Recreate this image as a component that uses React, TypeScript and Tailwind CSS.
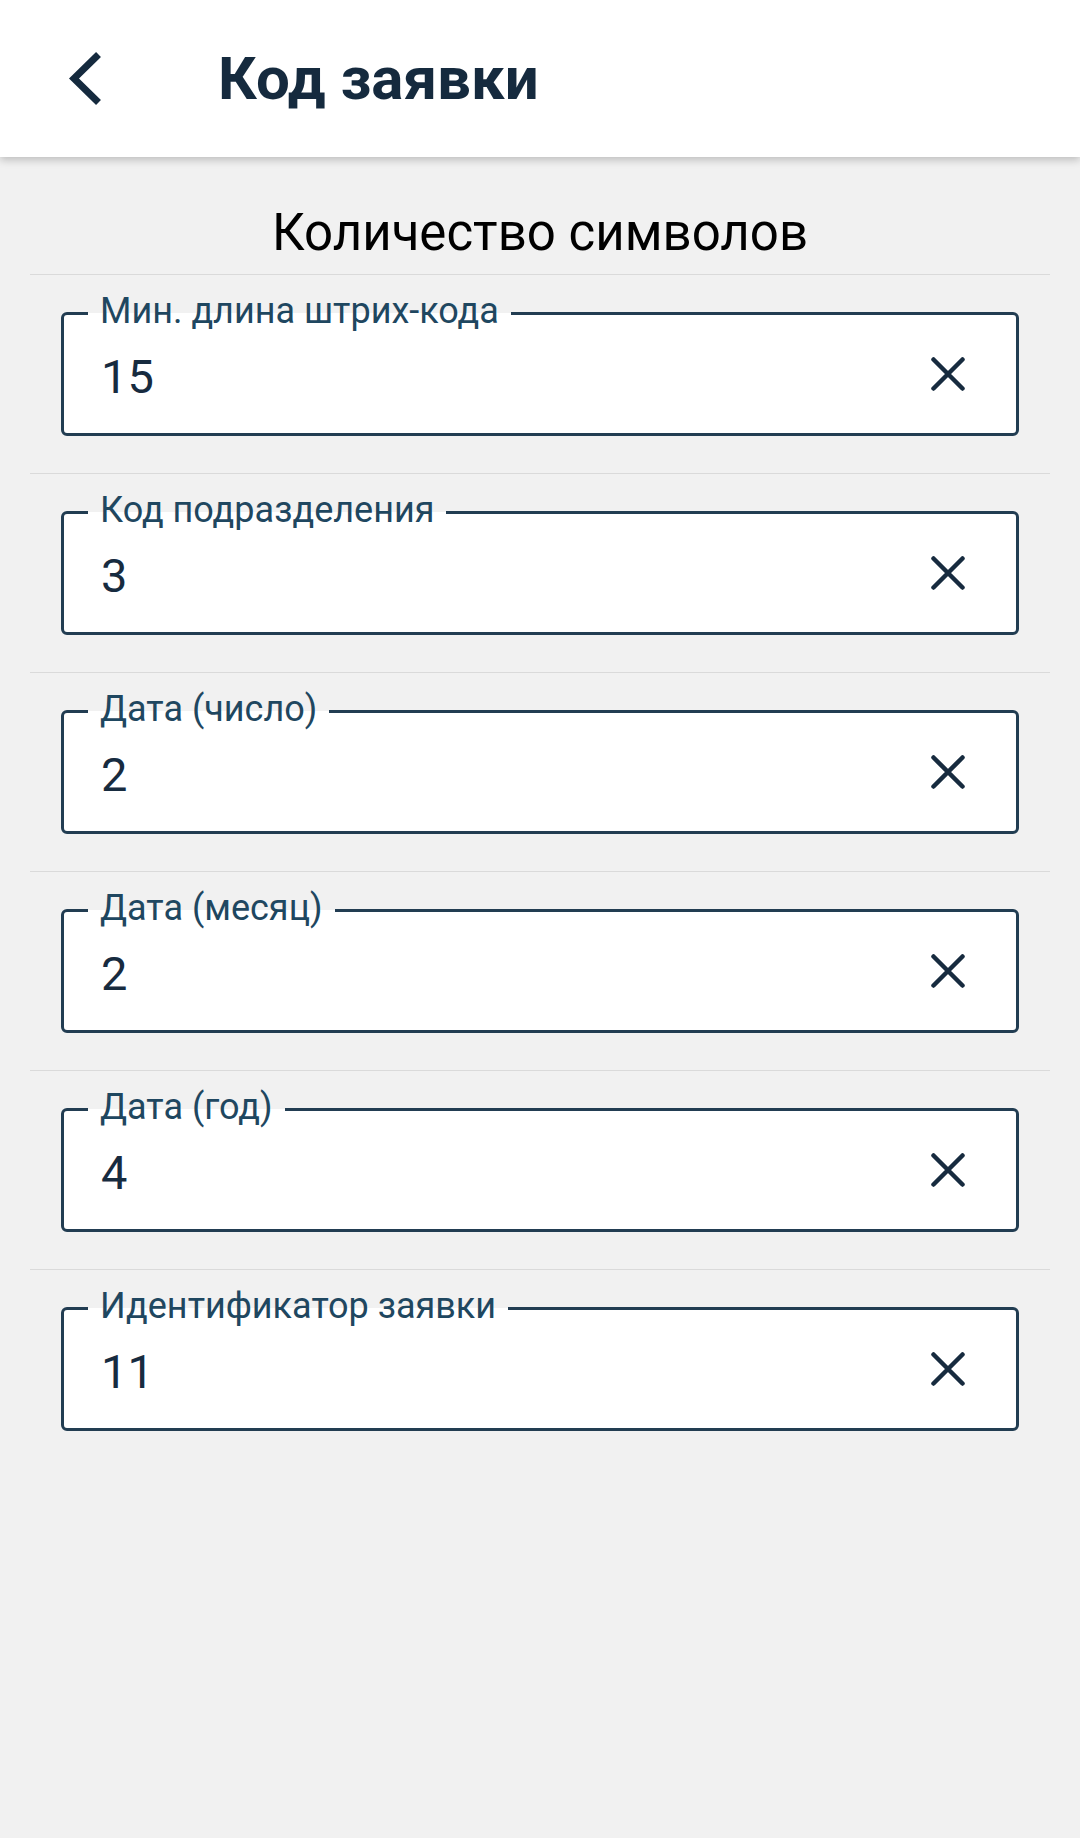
const fields = [
  { label: 'Мин. длина штрих-кода', value: '15' },
  { label: 'Код подразделения', value: '3' },
  { label: 'Дата (число)', value: '2' },
  { label: 'Дата (месяц)', value: '2' },
  { label: 'Дата (год)', value: '4' },
  { label: 'Идентификатор заявки', value: '11' },
]

function ClearIcon() {
  return (
    <svg width="34" height="34" viewBox="0 0 34 34" fill="none" className="shrink-0">
      <path d="M2.5 2.5 L31.5 31.5 M31.5 2.5 L2.5 31.5" stroke="#172b3f" strokeWidth="4.5" strokeLinecap="round" />
    </svg>
  )
}

function Field({ label, value }: { label: string; value: string }) {
  return (
    <div>
      <div className="mx-[30px] h-px bg-[#dadada]" />
      <div className="px-[61px] py-[37px]">
        <div className="relative flex h-[124px] items-center rounded-[6px] border-[3px] border-[#223d52] bg-white">
          <span className="absolute left-[24px] top-[-24px] bg-[linear-gradient(to_bottom,#f1f1f1_22px,#ffffff_22px)] px-[12px] text-[36px] leading-[40px] text-[#1f4760]">
            {label}
          </span>
          <span className="flex-1 pl-[37px] pt-[5px] text-[47px] leading-[46px] text-[#172b3f]">{value}</span>
          <div className="mr-[51px]">
            <ClearIcon />
          </div>
        </div>
      </div>
    </div>
  )
}

export default function App() {
  return (
    <div className="min-h-[1838px] bg-[#f1f1f1] font-['Roboto',sans-serif]">
      {/* Top bar */}
      <header className="relative z-10 flex h-[157px] items-center bg-white shadow-[0_3px_8px_rgba(0,0,0,0.22)]">
        <svg width="40" height="56" viewBox="0 0 40 56" fill="none" className="ml-[64px]">
          <path d="M32 6 L10 27.5 L32 49" stroke="#152a3e" strokeWidth="7" strokeLinecap="square" />
        </svg>
        <h1 className="ml-[114px] text-[60px] font-bold leading-[60px] text-[#152a3e]">Код заявки</h1>
      </header>

      {/* Section */}
      <div className="pb-[11px] pt-[46px] text-center text-[51px] leading-[60px] text-black">Количество символов</div>

      {fields.map((f) => (
        <Field key={f.label} label={f.label} value={f.value} />
      ))}
    </div>
  )
}
